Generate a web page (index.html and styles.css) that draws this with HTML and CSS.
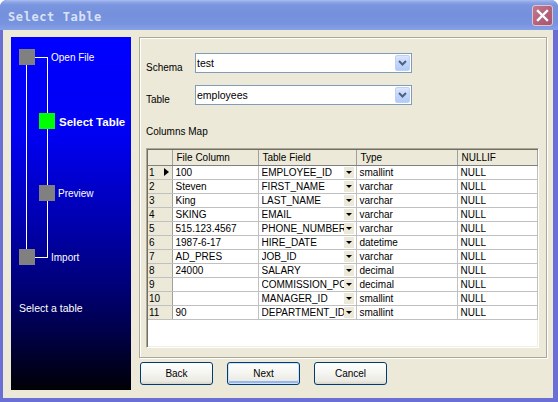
FILE: index.html
```html
<!DOCTYPE html>
<html lang="en">
<head>
    <meta charset="UTF-8">
    <title>Select Table</title>
    <link rel="stylesheet" href="styles.css">
</head>
<body>
    <div class="window">
        <div class="titlebar">
            <div class="title-text">Select Table</div>
            <div class="close-button">
                <svg width="19" height="19" viewBox="0 0 19 19">
                    <path d="M5 5 L14 14 M14 5 L5 14" stroke="#fff" stroke-width="2.4" stroke-linecap="square"/>
                </svg>
            </div>
        </div>

        <div class="client">
            <!-- wizard steps -->
            <div class="steps-panel">
                <svg class="step-lines" width="120" height="353">
                    <path d="M15.5 28 V212 M24 20.5 H36.5 V220.5 H24" stroke="#fff" stroke-width="1" fill="none" shape-rendering="crispEdges"/>
                </svg>
                <div class="step step-open">
                    <div class="step-box"></div>
                    <div class="step-label">Open File</div>
                </div>
                <div class="step step-select">
                    <div class="step-box current"></div>
                    <div class="step-label current">Select Table</div>
                </div>
                <div class="step step-preview">
                    <div class="step-box"></div>
                    <div class="step-label">Preview</div>
                </div>
                <div class="step step-import">
                    <div class="step-box"></div>
                    <div class="step-label">Import</div>
                </div>
                <div class="step-hint">Select a table</div>
            </div>

            <div class="main">
                <div class="group-box">
                    <div class="field-row">
                        <div class="field-label">Schema</div>
                        <div class="combo">
                            <div class="combo-text">test</div>
                            <div class="combo-button">
                                <svg width="9" height="6" viewBox="0 0 9 6"><polyline points="1,1 4.5,4.5 8,1" fill="none" stroke="#4d6185" stroke-width="2"/></svg>
                            </div>
                        </div>
                    </div>
                    <div class="field-row">
                        <div class="field-label">Table</div>
                        <div class="combo">
                            <div class="combo-text">employees</div>
                            <div class="combo-button">
                                <svg width="9" height="6" viewBox="0 0 9 6"><polyline points="1,1 4.5,4.5 8,1" fill="none" stroke="#4d6185" stroke-width="2"/></svg>
                            </div>
                        </div>
                    </div>
                    <div class="section-label">Columns Map</div>

                    <div class="grid">
                        <table class="map">
                            <colgroup>
                                <col style="width: 24px">
                                <col style="width: 86px">
                                <col style="width: 98px">
                                <col style="width: 101px">
                                <col style="width: 80px">
                            </colgroup>
                            <thead>
                                <tr>
                                    <th></th>
                                    <th>File Column</th>
                                    <th>Table Field</th>
                                    <th>Type</th>
                                    <th>NULLIF</th>
                                </tr>
                            </thead>
                            <tbody id="mapRows"></tbody>
                        </table>
                    </div>
                </div>

                <div class="buttons">
                    <button class="btn">Back</button>
                    <button class="btn default">Next</button>
                    <button class="btn">Cancel</button>
                </div>
            </div>
        </div>
    </div>

    <script>
        const columns = [
            ['100', 'EMPLOYEE_ID', 'smallint'],
            ['Steven', 'FIRST_NAME', 'varchar'],
            ['King', 'LAST_NAME', 'varchar'],
            ['SKING', 'EMAIL', 'varchar'],
            ['515.123.4567', 'PHONE_NUMBER', 'varchar'],
            ['1987-6-17', 'HIRE_DATE', 'datetime'],
            ['AD_PRES', 'JOB_ID', 'varchar'],
            ['24000', 'SALARY', 'decimal'],
            ['', 'COMMISSION_PCT', 'decimal'],
            ['', 'MANAGER_ID', 'smallint'],
            ['90', 'DEPARTMENT_ID', 'smallint']
        ];

        const body = document.getElementById('mapRows');
        columns.forEach((col, i) => {
            const tr = document.createElement('tr');
            tr.innerHTML = `
                <td class="row-head"><span>${i + 1}</span>${i === 0 ? '<span class="row-arrow"></span>' : ''}</td>
                <td>${col[0]}</td>
                <td><div class="field-cell"><span class="field-name">${col[1]}</span><span class="cell-drop"></span></div></td>
                <td>${col[2]}</td>
                <td>NULL</td>
            `;
            body.appendChild(tr);
        });
    </script>
</body>
</html>
```

FILE: styles.css
```css
body {
    margin: 0;
    background: #fff;
    font-family: 'Liberation Sans', Arial, sans-serif;
    font-size: 10px;
    color: #000;
}

.window {
    width: 558px;
    height: 402px;
    background: #6a6fd6;
    border-radius: 7px 7px 0 0;
    display: flex;
    flex-direction: column;
    overflow: hidden;
}

.titlebar {
    height: 30px;
    flex-shrink: 0;
    display: flex;
    align-items: center;
    justify-content: space-between;
    padding: 0 5px 0 8px;
    background: linear-gradient(#a9bdf1 0, #8ea6e6 2px, #7a95df 5px, #7590dc 50%, #7994df 80%, #86a1e6 100%);
}

.title-text {
    margin-top: 4px;
    font-family: 'DejaVu Sans Mono', monospace;
    font-weight: bold;
    font-size: 12px;
    line-height: 14px;
    letter-spacing: 0.6px;
    color: #d9e2f6;
}

.close-button {
    width: 19px;
    height: 19px;
    border: 1px solid #e2c3cc;
    border-radius: 3px;
    background: linear-gradient(135deg, #c27a8d, #b2607a 60%, #a85670);
}

.close-button svg {
    display: block;
}

.client {
    flex: 1;
    margin: 0 5px 4px 3px;
    background: #ece9d8;
    padding: 7px 0 0 8px;
    display: flex;
    gap: 8px;
}

/* wizard steps */
.steps-panel {
    position: relative;
    width: 120px;
    height: 353px;
    background: linear-gradient(#0000ff 0%, #0000f2 28%, #0000b0 52%, #000080 68%, #000048 84%, #000006 100%);
    color: #fff;
}

.step-lines {
    position: absolute;
    left: 0;
    top: 0;
}

.step {
    position: absolute;
    display: flex;
    align-items: center;
    height: 16px;
}

.step-open { left: 8px; top: 12px; gap: 16px; }
.step-select { left: 28px; top: 76px; gap: 4px; }
.step-preview { left: 28px; top: 148px; gap: 3px; }
.step-import { left: 8px; top: 212px; gap: 16px; }

.step-box {
    width: 16px;
    height: 16px;
    background: #808080;
}

.step-box.current {
    background: #00ff00;
}

.step-label {
    margin-top: 2px;
    line-height: 16px;
    white-space: nowrap;
}

.step-label.current {
    font-weight: bold;
    font-size: 11.5px;
}

.step-hint {
    position: absolute;
    left: 8px;
    top: 265px;
    font-size: 10.5px;
    line-height: 12px;
}

/* right side */
.main {
    display: flex;
    flex-direction: column;
    gap: 4px;
}

.group-box {
    width: 408px;
    height: 321px;
    box-sizing: border-box;
    border: 1px solid #aca899;
    box-shadow: inset 1px 1px #fff, 1px 1px #fff;
    padding: 15px 0 0 6px;
}

.field-row {
    display: flex;
    align-items: flex-end;
    margin-bottom: 12px;
}

.field-label {
    width: 49px;
    line-height: 10px;
}

.combo {
    width: 217px;
    height: 20px;
    box-sizing: border-box;
    border: 1px solid #7f9db9;
    background: #fff;
    display: flex;
    align-items: center;
}

.combo-text {
    flex: 1;
    padding-left: 1px;
    font-size: 10.5px;
}

.combo-button {
    width: 15px;
    height: 16px;
    margin-right: 1px;
    box-sizing: border-box;
    border: 1px solid #bdd0f6;
    border-radius: 2px;
    background: linear-gradient(#dce7fe, #c3d5fb 50%, #b4cbf8);
    display: flex;
    align-items: center;
    justify-content: center;
}

.combo-button svg {
    display: block;
}

.section-label {
    margin-top: 21px;
    margin-bottom: 10px;
    line-height: 12px;
}

.grid {
    width: 393px;
    height: 200px;
    box-sizing: border-box;
    border: 1px solid;
    border-color: #aca899 #fff #fff #aca899;
    box-shadow: inset 1px 1px #716f64, inset -1px -1px #f1efe2;
    padding: 1px;
    background: #fff;
    overflow: hidden;
}

.map {
    table-layout: fixed;
    border-collapse: collapse;
    width: 389px;
}

.map th,
.map td {
    padding: 0 2px 0 3px;
    white-space: nowrap;
    overflow: hidden;
    text-align: left;
    font-weight: normal;
}

.map th {
    height: 15px;
    padding-left: 4px;
    background: #ece9d8;
    border-right: 1px solid #a0a0a0;
    border-bottom: 1px solid #808080;
    line-height: 15px;
}

.map td {
    height: 13px;
    line-height: 13px;
    border: 1px solid #c0c0c0;
    border-top: none;
    border-left: none;
}

.map td.row-head {
    background: #ece9d8;
    padding-left: 1px;
    border-right-color: #a0a0a0;
}

.row-head {
    position: relative;
}

.row-arrow {
    position: absolute;
    right: 3px;
    top: 2px;
    width: 0;
    height: 0;
    border-left: 5px solid #000;
    border-top: 4.5px solid transparent;
    border-bottom: 4.5px solid transparent;
}

.field-cell {
    display: flex;
    align-items: center;
}

.field-name {
    flex: 1;
    overflow: hidden;
}

.cell-drop {
    width: 10px;
    height: 11px;
    flex-shrink: 0;
    background: #ece9d8;
    display: flex;
    align-items: center;
    justify-content: center;
}

.cell-drop::after {
    content: '';
    border-top: 3px solid #000;
    border-left: 3px solid transparent;
    border-right: 3px solid transparent;
}

.buttons {
    display: flex;
    gap: 14px;
    padding-left: 1px;
}

.btn {
    width: 73px;
    height: 23px;
    border: 1px solid #003c74;
    border-radius: 3px;
    background: linear-gradient(#ffffff, #f4f4f0 50%, #ebeae3 85%, #d8d4ca);
    font-family: 'Liberation Sans', Arial, sans-serif;
    font-size: 10px;
    color: #000;
    padding: 0;
}

.btn.default {
    box-shadow: inset 0 0 0 1px #cfe0fb, inset 0 -2px 0 1px #96b7ec;
}
```
